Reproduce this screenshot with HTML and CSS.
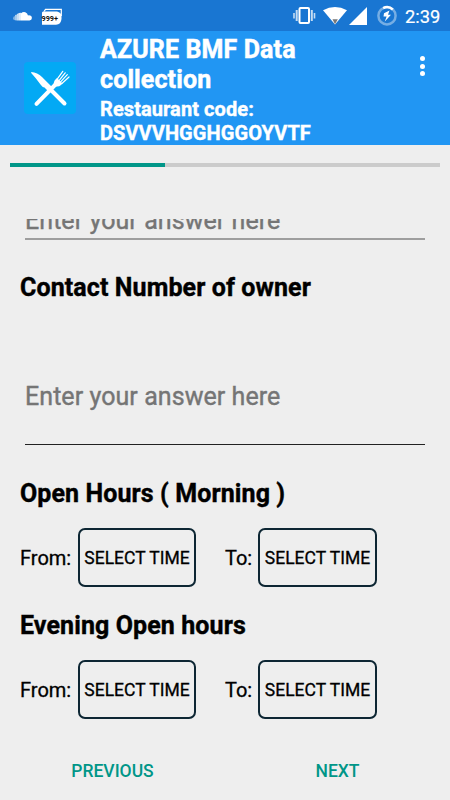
FILE: index.html
```html
<!DOCTYPE html>
<html lang="en">
<head>
  <meta charset="UTF-8">
  <title>AZURE BMF Data collection</title>
  <link rel="stylesheet" href="styles.css">
</head>
<body>

<div class="status-bar">
  <svg class="status-left" width="70" height="31" viewBox="0 0 70 31">
    <path d="M21 20.4V13.300Q23 11.600 25.300 12.300Q27.500 13.200 28 15.400Q31.800 15 31.900 18Q31.800 20.400 29.500 20.400Z" fill="#fff"/>
    <path d="M19 20.400V13L21 12.800V20.400Z" fill="#e2eef9"/>
    <path d="M17 20.400V14L19 13V20.400Z" fill="#c8def3"/>
    <path d="M15 20.300V15L17 14.500V20.400Z" fill="#a5caec"/>
    <path d="M13 18.200Q13 16.500 15 16V20.300Q13 20 13 18.200Z" fill="#7db1e3"/>
    <path d="M44 11.500L45.500 9.300H61.300V16" fill="none" stroke="#fff" stroke-width="1.200"/>
    <path d="M42 12.500L43 11.500H57Q61.500 12.500 61.500 16V19Q61 24.500 56 24.800H42Z" fill="#fff"/>
    <text class="badge-text" x="41.500" y="21.300" textLength="16.500" lengthAdjust="spacingAndGlyphs">999+</text>
  </svg>
  <svg class="status-right" width="110" height="31" viewBox="0 0 110 31">
    <rect x="9.500" y="8" width="9.500" height="15" rx="1" fill="none" stroke="#fff" stroke-width="2"/>
    <path d="M6.700 10V21M21.800 10V21" stroke="#c5dcf3" stroke-width="2"/>
    <path d="M4 13V18.500M24.500 13V18.500" stroke="#c5dcf3" stroke-width="1.600"/>
    <path d="M33 10.300Q45 3.500 57 10.300L45 24.500Z" fill="#fff"/>
    <path d="M42.500 19.200H47.800L45 24.300Z" fill="#777"/>
    <path d="M77 7V25H59Z" fill="#fff"/>
    <circle cx="97" cy="15.800" r="8.600" fill="none" stroke="#76aee4" stroke-width="2.500"/>
    <path d="M93.200 8.100A8.600 8.600 0 0 1 102.800 9.500" fill="none" stroke="#fff" stroke-width="2.500"/>
    <path d="M99.500 10.500L94 13.300L93.500 16.500H96.600L94.800 21.500L101 14.800H98Z" fill="#fff"/>
  </svg>
  <span class="clock">2:39</span>
</div>

<header class="app-bar">
  <svg class="logo" width="52" height="52" viewBox="0 0 52 52">
    <rect width="52" height="52" rx="4" fill="#03a9f4"/>
    <path d="M31.500 22.500L12.500 41.800" stroke="#fff" stroke-width="4" stroke-linecap="round"/>
    <path d="M26 27L40.500 41.500" stroke="#fff" stroke-width="4" stroke-linecap="round"/>
    <path d="M7.200 10Q13.500 10.500 18 15L29 26L25 30L20.500 25.500Q18.500 25.500 16.500 22.500Q11.500 15.500 7.200 11Z" fill="#fff"/>
    <path d="M30 24Q29 20 31.500 17.500L33 16L38.500 21.500L37 23Q34.500 25.500 30 24Z" fill="#fff"/>
    <path d="M33.200 17.200L38.800 9.300M35 18.700L41.200 10.800M36.400 20.100L43.300 12.700M37.900 21.500L45 15" stroke="#fff" stroke-width="1.200" stroke-linecap="round"/>
  </svg>
  <div class="titles">
    <h1 class="title">AZURE BMF Data<br>collection</h1>
    <p class="subtitle">Restaurant code:<br>DSVVVHGGHGGOYVTF</p>
  </div>
  <div class="menu">
    <span class="dot"></span>
    <span class="dot"></span>
    <span class="dot"></span>
  </div>
</header>

<div class="progress"><div class="progress-fill"></div></div>

<!-- scrolled form, first field is cut at the top -->
<main class="form">
  <div class="field field-cut"><span class="hint">Enter your answer here</span></div>
  <h2 class="question">Contact Number of owner</h2>
  <div class="field field-tall"><span class="hint">Enter your answer here</span></div>
  <h2 class="question question-hours">Open Hours ( Morning )</h2>
  <div class="hours">
    <span class="label">From:</span>
    <button class="time">SELECT TIME</button>
    <span class="label label-to">To:</span>
    <button class="time">SELECT TIME</button>
  </div>
  <h2 class="question question-evening">Evening Open hours</h2>
  <div class="hours">
    <span class="label">From:</span>
    <button class="time">SELECT TIME</button>
    <span class="label label-to">To:</span>
    <button class="time">SELECT TIME</button>
  </div>
</main>

<footer class="nav">
  <button class="nav-btn">PREVIOUS</button>
  <button class="nav-btn">NEXT</button>
</footer>

</body>
</html>
```
FILE: styles.css
```css
* { box-sizing: border-box; }
body { font-family: Roboto, sans-serif; margin: 0; width: 450px; height: 800px; background: #eee; color: #000; overflow: hidden; display: flex; flex-direction: column; }
button { font-family: inherit; background: none; border: none; padding: 0; margin: 0; white-space: nowrap; }

.status-bar { height: 31px; flex: none; background: #1976d2; color: #fff; display: flex; align-items: center; padding-right: 10px; }
.status-left { margin-right: auto; }
.badge-text { font-size: 8px; font-weight: bold; fill: #111; }
.clock { font-size: 18.3px; line-height: 31px; width: 35px; margin-left: 5px; padding-top: 2px; white-space: nowrap; -webkit-text-stroke: 0.2px #fff; }

.app-bar { height: 114px; flex: none; background: #2196f3; color: #fff; display: flex; align-items: flex-start; padding: 4px 25px 0 24px; }
.logo { margin-top: 27px; }
.titles { margin-left: 24px; flex: 1; white-space: nowrap; }
.title { margin: 0; font-size: 25px; line-height: 29.5px; font-weight: bold; letter-spacing: 0.12px; -webkit-text-stroke: 0.5px #fff; }
.subtitle { margin: 4px 0 0; font-size: 20px; line-height: 23.5px; font-weight: bold; letter-spacing: 0.08px; -webkit-text-stroke: 0.4px #fff; }
.menu { display: flex; flex-direction: column; gap: 2.5px; padding-top: 21px; }
.dot { width: 5px; height: 5px; border-radius: 50%; background: #fff; }

.progress { flex: none; height: 4px; margin: 18px 10px 0; background: #cbcbcb; }
.progress-fill { width: 155px; height: 4px; background: #009688; }

.form { flex: none; height: 530px; margin-top: 52px; padding: 0 20px; overflow: hidden; }
.field { margin: 0 5px; display: flex; }
.hint { font-size: 25px; line-height: 30px; color: #757575; white-space: nowrap; letter-spacing: 0.06px; -webkit-text-stroke: 0.4px #757575; }
.field-cut { height: 21px; align-items: flex-end; padding-bottom: 2px; border-bottom: 2px solid #9e9e9e; }
.field-tall { height: 143px; padding-top: 80px; border-bottom: 1px solid #222; }
.question { margin: 34px 0 0; font-size: 25px; line-height: 28px; font-weight: bold; letter-spacing: 0.1px; white-space: nowrap; -webkit-text-stroke: 0.4px #000; }
.question-hours { margin-top: 35px; }
.question-evening { margin-top: 25px; }
.hours { display: flex; align-items: center; margin-top: 20px; height: 59px; }
.label { font-size: 20px; width: 58px; white-space: nowrap; -webkit-text-stroke: 0.3px #000; }
.label-to { width: 33px; margin-left: 29px; }
.time { width: 118px; height: 59px; border: 2px solid #0d2633; border-radius: 7px; font-size: 17.5px; color: #000; padding-top: 1px; -webkit-text-stroke: 0.3px #000; }
.label-to + .time { width: 119px; }

.nav { display: flex; justify-content: space-around; }
.nav-btn { width: 225px; height: 40px; padding: 3px 0 0; font-size: 17.5px; font-weight: 500; color: #009688; }
```
